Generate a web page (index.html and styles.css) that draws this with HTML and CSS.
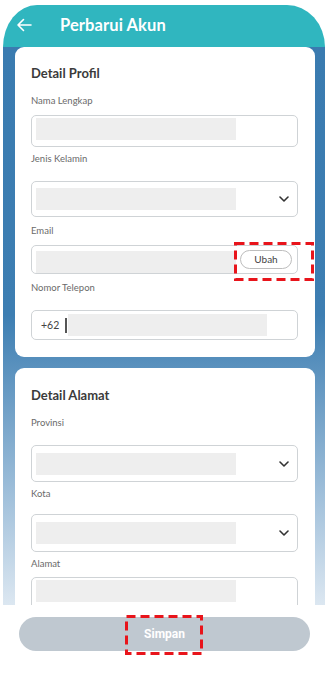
FILE: index.html
```html
<!DOCTYPE html>
<html lang="id">
<head>
<meta charset="utf-8">
<title>Perbarui Akun</title>
<link rel="stylesheet" href="styles.css">
</head>
<body>
<div class="screen">
  <header class="header">
    <svg class="back" width="16" height="14" viewBox="0 0 16 14" aria-hidden="true"><path d="M15 7H2M7.5 1.5L2 7l5.5 5.5" fill="none" stroke="#fff" stroke-width="1.6" stroke-linecap="round" stroke-linejoin="round"/></svg>
    <h1 class="title">Perbarui Akun</h1>
  </header>
  <main class="content">
    <section class="card">
      <h2 class="card-title">Detail Profil</h2>
      <div class="label">Nama Lengkap</div>
      <div class="input h32"><span class="bar"></span></div>
      <div class="label">Jenis Kelamin</div>
      <div class="input select h36"><span class="bar"></span><svg class="chev" width="10" height="6" viewBox="0 0 10 6"><path d="M1 1l4 4 4-4" fill="none" stroke="#333" stroke-width="1.6" stroke-linecap="round" stroke-linejoin="round"/></svg></div>
      <div class="label l2">Email</div>
      <div class="input h29 email"><span class="bar"></span><button class="ubah" type="button">Ubah</button><svg class="mark mark-ubah" width="80" height="39" viewBox="0 0 80 39"><rect x="1.5" y="1.5" width="77" height="36" fill="none" stroke="#e8141b" stroke-width="3" stroke-dasharray="9 5"/></svg></div>
      <div class="label l2">Nomor Telepon</div>
      <div class="input select h30 phone"><span class="code">+62</span><span class="cursor"></span><span class="bar"></span></div>
    </section>
    <section class="card">
      <h2 class="card-title">Detail Alamat</h2>
      <div class="label">Provinsi</div>
      <div class="input select h37"><span class="bar"></span><svg class="chev" width="10" height="6" viewBox="0 0 10 6"><path d="M1 1l4 4 4-4" fill="none" stroke="#333" stroke-width="1.6" stroke-linecap="round" stroke-linejoin="round"/></svg></div>
      <div class="label">Kota</div>
      <div class="input select s13 h38"><span class="bar"></span><svg class="chev" width="10" height="6" viewBox="0 0 10 6"><path d="M1 1l4 4 4-4" fill="none" stroke="#333" stroke-width="1.6" stroke-linecap="round" stroke-linejoin="round"/></svg></div>
      <div class="label">Alamat</div>
      <div class="input h38 top"><span class="bar"></span></div>
    </section>
  </main>
</div>
<footer class="footer">
  <button class="save" type="button">Simpan</button>
  <svg class="mark mark-save" width="78" height="40" viewBox="0 0 78 40"><rect x="1.5" y="1.5" width="75" height="37" fill="none" stroke="#e8141b" stroke-width="3" stroke-dasharray="9 5"/></svg>
</footer>
</body>
</html>
```
FILE: styles.css
```css
* { box-sizing: border-box; }
html, body { margin: 0; padding: 0; background: #fff; }
body { font-family: Lato, "Open Sans", sans-serif; width: 334px; height: 683px; overflow: hidden; }

.screen { margin: 5px 0 0 3px; width: 322px; }

.header {
  height: 42px;
  background: #30b6bf;
  border-radius: 34px 38px 0 0 / 42px 42px 0 0;
  display: flex;
  align-items: center;
  padding-left: 13px;
}
.back { display: block; margin-top: -2px; }
.title {
  margin: -2px 0 0 28px;
  color: #fff;
  font-size: 16.5px;
  font-weight: 700;
  letter-spacing: 0.1px;
}

.content {
  height: 558px;
  overflow: hidden;
  padding: 0 10px 0 12px;
  background: linear-gradient(to bottom, #3a7bb0 0%, #3d7eb2 48%, #9fbfda 80%, #dce7f1 100%);
  display: flex;
  flex-direction: column;
  gap: 11px;
}

.card {
  background: #fff;
  border-radius: 9px;
  padding: 17px 17px 17px 16px;
  flex-shrink: 0;
}
.card-title {
  margin: 0;
  font-size: 13px;
  line-height: 18px;
  font-weight: 700;
  color: #3b3b3b;
}
.card + .card .card-title { margin-top: 1px; }

.label {
  margin-top: 12px;
  font-size: 9.5px;
  line-height: 14px;
  color: #6a6a6a;
}
.input + .label { margin-top: 5px; }
.input + .label.l2 { margin-top: 7px; }

.input {
  position: relative;
  margin-top: 7px;
  border: 1px solid #cfd3d6;
  border-radius: 5px;
  display: flex;
  align-items: center;
  padding: 0 4px;
}
.input.select { margin-top: 15px; }
.input.s13 { margin-top: 13px; }
.input.top { margin-top: 6px; align-items: flex-start; padding-top: 2px; }
.h29 { height: 29px; }
.h30 { height: 30px; }
.h32 { height: 32px; align-items: flex-start; padding-top: 2px; }
.h36 { height: 36px; }
.h37 { height: 37px; }
.h38 { height: 38px; }

.bar {
  display: block;
  width: 200px;
  height: 22px;
  background: #eeeeee;
}
.email .bar { margin-top: 5px; }
.email { align-items: flex-start; }

.chev { position: absolute; right: 8px; top: 50%; margin-top: -3px; }

.ubah {
  margin: 4px 0 0 4px;
  width: 52px;
  height: 19px;
  border: 1px solid #bdbdbd;
  border-radius: 10px;
  background: #fff;
  font-family: Lato, "Open Sans", sans-serif;
  font-size: 10px;
  color: #444;
  padding: 0;
  line-height: 17px;
}

.phone { padding-left: 9px; }
.code { font-size: 10.5px; color: #444; margin-right: 6px; }
.cursor { width: 1.5px; height: 15px; background: #555; margin-right: 1px; }
.phone .bar { width: 199px; }

.mark {
  position: absolute;
  display: block;
  pointer-events: none;
}
.mark-ubah { left: 202px; top: -4px; }

.footer {
  position: relative;
  padding: 12px 0 0 19px;
}
.save {
  width: 291px;
  height: 34px;
  border: none;
  border-radius: 17px;
  background: #bfc8d0;
  color: #fff;
  font-family: Roboto, "Liberation Sans", sans-serif;
  font-size: 12px;
  font-weight: 700;
  padding: 0;
}
.mark-save { left: 125px; top: 10px; }
```
